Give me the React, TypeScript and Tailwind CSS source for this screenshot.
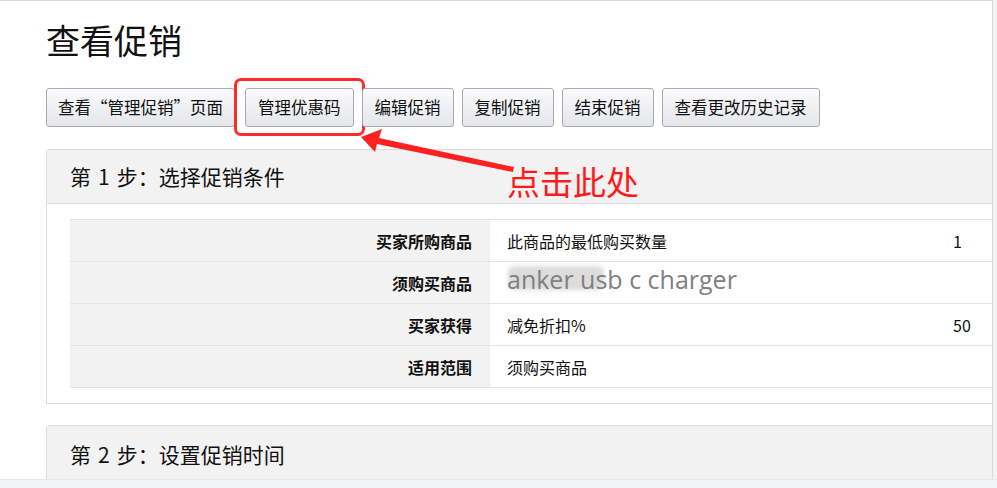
const rows = [
  { label: "买家所购商品", value: "此商品的最低购买数量", num: "1" },
  { label: "须购买商品", value: "anker usb c charger", num: "", product: true },
  { label: "买家获得", value: "减免折扣%", num: "50" },
  { label: "适用范围", value: "须购买商品", num: "" },
];

const buttons = ["查看“管理促销”页面", "管理优惠码", "编辑促销", "复制促销", "结束促销", "查看更改历史记录"];

function Btn({ label, marked, first }: { label: string; marked?: boolean; first?: boolean }) {
  return (
    <div className={marked ? "relative ml-[2px]" : "relative"}>
      <button
        className={
          (first ? "px-[11px] " : "px-[12px] ") +
          "h-[39px] rounded-[3px] border border-[#a9abb0] bg-gradient-to-b from-[#fafafb] to-[#e4e6ea] text-[16.5px] text-[#111] whitespace-nowrap"
        }
      >
        {label}
      </button>
      {marked && (
        <div className="absolute -left-[11px] -right-[11px] -top-[10px] -bottom-[9px] border-[3px] border-[#ff2a2a] rounded-[7px]" />
      )}
    </div>
  );
}

function StepTitle({ n, text }: { n: string; text: string }) {
  return (
    <span>
      第<span className="mx-[7px]">{n}</span>步：{text}
    </span>
  );
}

export default function App() {
  return (
    <div
      className="w-[997px] h-[488px] overflow-hidden flex flex-col bg-white"
      style={{ fontFamily: '"Noto Sans CJK SC", "Noto Sans", sans-serif' }}
    >
      <div className="flex flex-1 min-h-0">
        <div className="relative w-[993px] border-t border-r border-[#dadada] pl-[46px] pt-[18px] overflow-hidden">
          {/* TITLE */}
          <h1 className="text-[34px] leading-[42px] text-[#111]">查看促销</h1>

          {/* ACTIONS */}
          <div className="flex gap-[8px] mt-[27px]">
            {buttons.map((b, i) => (
              <Btn key={b} label={b} first={i === 0} marked={b === "管理优惠码"} />
            ))}
          </div>

          {/* STEP 1 */}
          <div className="mt-[22px] border-l border-t border-b border-[#dcdcdc] rounded-tl-[4px]">
            <div className="h-[54px] bg-[#f2f2f2] border-b border-[#dcdcdc] flex items-center pl-[23px] text-[21px] text-[#111]">
              <StepTitle n="1" text="选择促销条件" />
            </div>
            <div className="pl-[23px] pt-[15px] pb-[15px]">
              <div className="border-t border-b border-[#e3e3e3]">
                {rows.map((r, i) => (
                  <div key={r.label} className={i > 0 ? "flex h-[42px] border-t border-[#e3e3e3]" : "flex h-[41px]"}>
                    <div className="w-[420px] bg-[#f2f2f2] flex items-center justify-end pr-[18px] text-[16px] font-bold text-[#111]">
                      {r.label}
                    </div>
                    <div className="w-[463px] flex items-center pl-[17px] text-[16px] text-[#111]">
                      {r.product ? (
                        <span className="relative -mt-[6px]">
                          <span className="absolute left-[1px] top-[5px] w-[96px] h-[24px] rounded-[6px] bg-[#dcdcdc] blur-[2px]" />
                          <span className="relative text-[25px] text-[#808080]" style={{ fontFamily: '"Open Sans", sans-serif' }}>
                            {r.value}
                          </span>
                        </span>
                      ) : (
                        r.value
                      )}
                    </div>
                    <div className="flex-1 flex items-center text-[16px] text-[#111]">{r.num}</div>
                  </div>
                ))}
              </div>
            </div>
          </div>

          {/* STEP 2 */}
          <div className="mt-[21px] border-l border-t border-[#dcdcdc] rounded-tl-[4px]">
            <div className="h-[58px] bg-[#f2f2f2] flex items-center pl-[23px] text-[21px] text-[#111]">
              <StepTitle n="2" text="设置促销时间" />
            </div>
          </div>

          {/* ANNOTATION */}
          <svg className="absolute inset-0 pointer-events-none" width="993" height="480">
            <polygon points="361,136 382,128 379,137 514,166 513,171 377,143 375,151" fill="#ff2020" />
          </svg>
          <div className="absolute left-[507px] top-[158px] text-[33px] leading-[44px] text-[#ff1a1a]">点击此处</div>
        </div>
        <div className="w-[4px] bg-[#f4f4f4]" />
      </div>
      <div className="h-[9px] bg-[#f3f4f6] border-t border-[#e8e8e8]" />
    </div>
  );
}
